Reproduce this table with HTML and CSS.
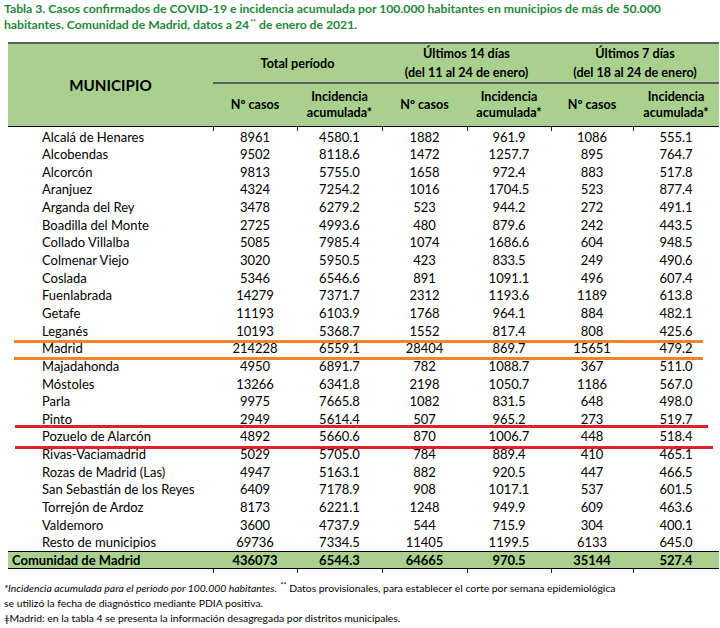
FILE: index.html
```html
<!DOCTYPE html>
<html lang="es">
<head>
<meta charset="utf-8">
<title>Tabla 3</title>
<link rel="stylesheet" href="styles.css">
</head>
<body>
<div class="page">
  <h1 class="title">Tabla 3. Casos confirmados de COVID-19 e incidencia acumulada por 100.000 habitantes en municipios de más de 50.000 habitantes. Comunidad de Madrid, datos a 24<sup>**</sup> de enero de 2021.</h1>
  <div class="tablewrap">
    <table class="data">
      <colgroup>
        <col class="c-name"><col class="c1"><col class="c2"><col class="c3"><col class="c4"><col class="c5"><col class="c6">
      </colgroup>
      <thead>
        <tr class="h1">
          <th rowspan="2" class="muni">MUNICIPIO</th>
          <th colspan="2" class="grp">Total período</th>
          <th colspan="2" class="grp">Últimos 14 días<br>(del 11 al 24 de enero)</th>
          <th colspan="2" class="grp">Últimos 7 días<br>(del 18 al 24 de enero)</th>
        </tr>
        <tr class="h2">
          <th>Nº casos</th><th>Incidencia<br>acumulada*</th>
          <th>Nº casos</th><th>Incidencia<br>acumulada*</th>
          <th>Nº casos</th><th>Incidencia<br>acumulada*</th>
        </tr>
      </thead>
      <tbody>
        <tr class="first"><td>Alcalá de Henares</td><td>8961</td><td>4580.1</td><td>1882</td><td>961.9</td><td>1086</td><td>555.1</td></tr>
        <tr><td>Alcobendas</td><td>9502</td><td>8118.6</td><td>1472</td><td>1257.7</td><td>895</td><td>764.7</td></tr>
        <tr><td>Alcorcón</td><td>9813</td><td>5755.0</td><td>1658</td><td>972.4</td><td>883</td><td>517.8</td></tr>
        <tr><td>Aranjuez</td><td>4324</td><td>7254.2</td><td>1016</td><td>1704.5</td><td>523</td><td>877.4</td></tr>
        <tr><td>Arganda del Rey</td><td>3478</td><td>6279.2</td><td>523</td><td>944.2</td><td>272</td><td>491.1</td></tr>
        <tr><td>Boadilla del Monte</td><td>2725</td><td>4993.6</td><td>480</td><td>879.6</td><td>242</td><td>443.5</td></tr>
        <tr><td>Collado Villalba</td><td>5085</td><td>7985.4</td><td>1074</td><td>1686.6</td><td>604</td><td>948.5</td></tr>
        <tr><td>Colmenar Viejo</td><td>3020</td><td>5950.5</td><td>423</td><td>833.5</td><td>249</td><td>490.6</td></tr>
        <tr><td>Coslada</td><td>5346</td><td>6546.6</td><td>891</td><td>1091.1</td><td>496</td><td>607.4</td></tr>
        <tr><td>Fuenlabrada</td><td>14279</td><td>7371.7</td><td>2312</td><td>1193.6</td><td>1189</td><td>613.8</td></tr>
        <tr><td>Getafe</td><td>11193</td><td>6103.9</td><td>1768</td><td>964.1</td><td>884</td><td>482.1</td></tr>
        <tr><td>Leganés</td><td>10193</td><td>5368.7</td><td>1552</td><td>817.4</td><td>808</td><td>425.6</td></tr>
        <tr><td>Madrid</td><td>214228</td><td>6559.1</td><td>28404</td><td>869.7</td><td>15651</td><td>479.2</td></tr>
        <tr><td>Majadahonda</td><td>4950</td><td>6891.7</td><td>782</td><td>1088.7</td><td>367</td><td>511.0</td></tr>
        <tr><td>Móstoles</td><td>13266</td><td>6341.8</td><td>2198</td><td>1050.7</td><td>1186</td><td>567.0</td></tr>
        <tr><td>Parla</td><td>9975</td><td>7665.8</td><td>1082</td><td>831.5</td><td>648</td><td>498.0</td></tr>
        <tr><td>Pinto</td><td>2949</td><td>5614.4</td><td>507</td><td>965.2</td><td>273</td><td>519.7</td></tr>
        <tr><td>Pozuelo de Alarcón</td><td>4892</td><td>5660.6</td><td>870</td><td>1006.7</td><td>448</td><td>518.4</td></tr>
        <tr><td>Rivas-Vaciamadrid</td><td>5029</td><td>5705.0</td><td>784</td><td>889.4</td><td>410</td><td>465.1</td></tr>
        <tr><td>Rozas de Madrid (Las)</td><td>4947</td><td>5163.1</td><td>882</td><td>920.5</td><td>447</td><td>466.5</td></tr>
        <tr><td>San Sebastián de los Reyes</td><td>6409</td><td>7178.9</td><td>908</td><td>1017.1</td><td>537</td><td>601.5</td></tr>
        <tr><td>Torrejón de Ardoz</td><td>8173</td><td>6221.1</td><td>1248</td><td>949.9</td><td>609</td><td>463.6</td></tr>
        <tr><td>Valdemoro</td><td>3600</td><td>4737.9</td><td>544</td><td>715.9</td><td>304</td><td>400.1</td></tr>
        <tr><td>Resto de municipios</td><td>69736</td><td>7334.5</td><td>11405</td><td>1199.5</td><td>6133</td><td>645.0</td></tr>
      </tbody>
      <tfoot>
        <tr class="total"><td>Comunidad de Madrid</td><td>436073</td><td>6544.3</td><td>64665</td><td>970.5</td><td>35144</td><td>527.4</td></tr>
        <tr class="ticks"><td></td><td></td><td></td><td></td><td></td><td></td><td></td></tr>
      </tfoot>
    </table>
    <div class="mark orange o1"></div>
    <div class="mark orange o2"></div>
    <div class="mark red r1"></div>
    <div class="mark red r2"></div>
  </div>
  <div class="notes">
    <p><em>*Incidencia acumulada para el periodo por 100.000 habitantes.</em> <sup>**</sup> Datos provisionales, para establecer el corte por semana epidemiológica</p>
    <p>se utilizó la fecha de diagnóstico mediante PDIA positiva.</p>
    <p>ǂMadrid: en la tabla 4 se presenta la información desagregada por distritos municipales.</p>
  </div>
</div>
</body>
</html>
```

FILE: styles.css
```css
* { box-sizing: border-box; }

html, body {
  margin: 0;
  padding: 0;
  background: #ffffff;
}

body {
  font-family: Lato, "Liberation Sans", sans-serif;
  color: #000;
  width: 720px;
  height: 628px;
  overflow: hidden;
}

.page {
  padding-top: 1px;
}

.title {
  margin: 0 0 0 4px;
  font-size: 12.2px;
  line-height: 16px;
  font-weight: 700;
  color: #23873a;
  width: 700px;
}

.title sup,
.notes sup {
  font-size: 7px;
  line-height: 1;
  vertical-align: baseline;
  position: relative;
  top: -4px;
  margin-left: 1px;
}

.tablewrap {
  position: relative;
  margin-top: 9px;
}

.data {
  margin-left: 8px;
  border-collapse: collapse;
  table-layout: fixed;
  width: 711px;
  font-size: 13px;
}

.c-name { width: 205px; }
.c1 { width: 84px; }
.c2 { width: 85px; }
.c3 { width: 85px; }
.c4 { width: 84px; }
.c5 { width: 82px; }
.c6 { width: 86px; }

.data th {
  background: #a9d08e;
  font-weight: 700;
  font-size: 12.6px;
  text-align: center;
  padding: 0;
}

.h1 th {
  border-top: 2px solid #5f5f5f;
  height: 39px;
  line-height: 19px;
  vertical-align: middle;
}

.h1 th.grp {
  border-bottom: 2px solid #5f5f5f;
}

.h1 th.muni {
  font-size: 15.2px;
  border-bottom: 1px solid #000;
  padding-top: 2px;
}

.h2 th {
  height: 43px;
  line-height: 16px;
  border-bottom: 1px solid #000;
}

.data tbody tr {
  height: 17.65px;
}

.data td {
  padding: 0;
  line-height: 15px;
  text-align: center;
  white-space: nowrap;
  vertical-align: middle;
}

.data tbody td:first-child {
  text-align: left;
  padding-left: 34px;
}

.data tbody tr.first {
  height: 19.9px;
}

.data tbody tr.first td {
  padding-top: 2px;
}

.data tbody tr.first td + td,
.ticks td + td {
  background-image: linear-gradient(#222, #222);
  background-size: 1px 4px;
  background-repeat: no-repeat;
  background-position: left top;
}

.total td {
  background: #a9d08e;
  font-weight: 700;
  border-top: 1px solid #000;
  border-bottom: 1px solid #000;
  height: 17px;
  line-height: 16px;
}

.total td:first-child {
  text-align: left;
  padding-left: 4px;
}

.ticks td {
  height: 5px;
  line-height: 0;
}

.mark {
  position: absolute;
  height: 3px;
}

.orange { background: #f5822b; }
.red { background: #e3202a; }

.o1 { top: 298px; left: 14px; width: 689px; }
.o2 { top: 315px; left: 14px; width: 689px; }
.r1 { top: 383px; left: 15px; width: 693px; }
.r2 { top: 404px; left: 15px; width: 698px; }

.notes {
  margin: 7px 0 0 4px;
  font-size: 10.4px;
  line-height: 15px;
}

.notes p {
  margin: 0;
}
```
